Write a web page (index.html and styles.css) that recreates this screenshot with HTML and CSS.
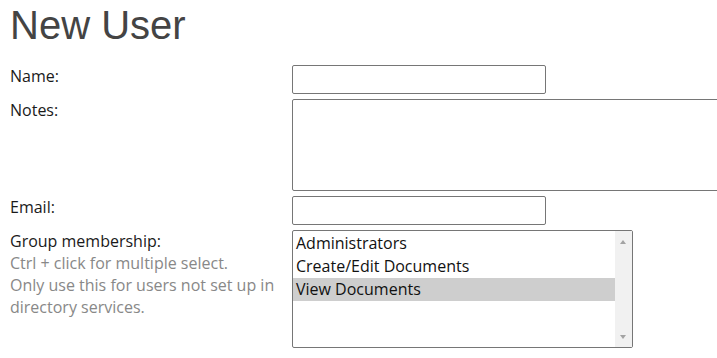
FILE: index.html
```html
<!DOCTYPE html>
<html lang="en">
<head>
<meta charset="utf-8">
<title>New User</title>
<link rel="stylesheet" href="styles.css">
</head>
<body>
<div class="page">
  <h1 class="title">New User</h1>
  <form class="form">
    <label class="label" for="name">Name:</label>
    <div class="field"><input class="input" id="name" type="text"></div>

    <label class="label" for="notes">Notes:</label>
    <div class="field"><textarea class="textarea" id="notes"></textarea></div>

    <label class="label" for="email">Email:</label>
    <div class="field"><input class="input" id="email" type="text"></div>

    <div class="label">
      <label for="groups">Group membership:</label>
      <div class="hint">Ctrl + click for multiple select.</div>
      <div class="hint">Only use this for users not set up in directory services.</div>
    </div>
    <div class="field">
      <div class="select-wrap">
        <select class="groups" id="groups" multiple>
          <option>Administrators</option>
          <option>Create/Edit Documents</option>
          <option selected>View Documents</option>
        </select>
        <div class="scrollbar" aria-hidden="true">
          <span class="arrow arrow-up"></span>
          <span class="arrow arrow-down"></span>
        </div>
      </div>
    </div>
  </form>
</div>
</body>
</html>
```

FILE: styles.css
```css
html, body {
  margin: 0;
  padding: 0;
  overflow: hidden;
  background: #fff;
}

.page {
  padding: 3px 10px 0 10px;
  font-family: "Open Sans", "Liberation Sans", sans-serif;
  color: #1a1a1a;
}

.title {
  margin: 0 0 18px 0;
  font-family: "Liberation Sans", Arial, sans-serif;
  font-weight: normal;
  font-size: 40px;
  line-height: 44px;
  color: #444;
}

.form {
  display: grid;
  grid-template-columns: 282px 460px;
  row-gap: 5px;
  align-items: start;
}

.label {
  font-size: 16px;
  line-height: 22px;
  padding-right: 10px;
}

.hint {
  color: #888;
}

.field {
  display: flex;
}

.input {
  box-sizing: border-box;
  width: 254px;
  height: 29px;
  margin: 0;
  border: 1px solid #767676;
  border-radius: 2px;
  font-family: "Open Sans", sans-serif;
  font-size: 14px;
  padding: 2px 4px;
}

.textarea {
  box-sizing: border-box;
  width: 460px;
  height: 92px;
  margin: 0;
  border: 1px solid #767676;
  border-radius: 2px;
  resize: none;
  font-family: "Open Sans", sans-serif;
  font-size: 14px;
}

.select-wrap {
  position: relative;
  width: 341px;
  height: 118px;
}

.groups {
  box-sizing: border-box;
  width: 341px;
  height: 118px;
  margin: 0;
  border: 1px solid #767676;
  border-radius: 2px;
  font-family: "Open Sans", sans-serif;
  font-size: 16px;
  color: #111;
  overflow-y: hidden;
  padding: 1px 0 0 0;
  display: block;
}

.groups option {
  padding: 0 2px 1px 3px;
  line-height: 22px;
}

.groups option:checked {
  background: #cecece;
  color: #111;
}

.scrollbar {
  position: absolute;
  top: 1px;
  right: 1px;
  bottom: 1px;
  width: 17px;
  background: #f1f1f1;
}

.arrow {
  position: absolute;
  left: 5px;
  width: 0;
  height: 0;
  border-left: 3.5px solid transparent;
  border-right: 3.5px solid transparent;
}

.arrow-up {
  top: 9px;
  border-bottom: 4px solid #a3a3a3;
}

.arrow-down {
  bottom: 8px;
  border-top: 4px solid #a3a3a3;
}
```
